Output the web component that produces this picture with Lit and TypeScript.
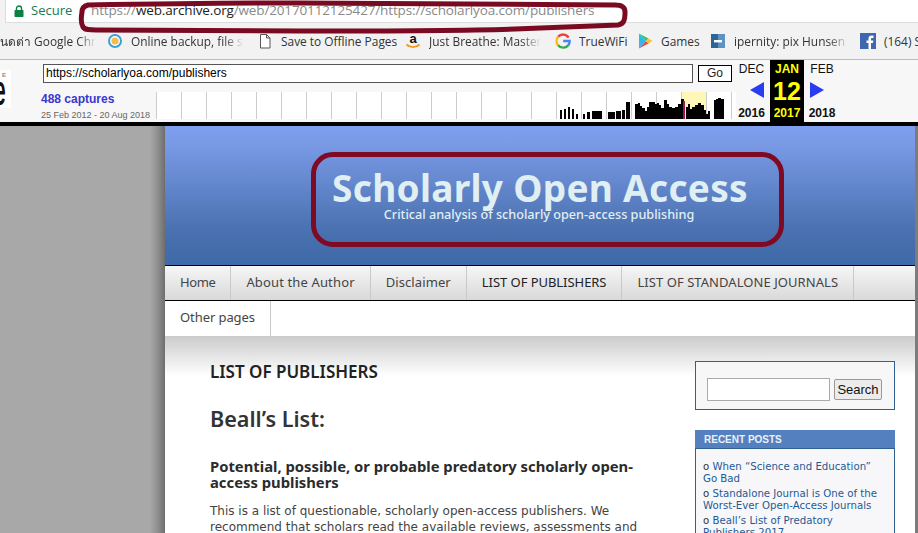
import { LitElement, html, css, svg } from "lit";
import { customElement } from "lit/decorators.js";

const SMALL_BARS: [number, number, number][] = [
  [560,2,9],[564,2,10],[568,2,12],[572,2,10],[576,2,5],[583,2,5],[587,3,7],[592,10,8],
  [608,7,7],[616,5,8],[622,3,9],[626,4,17],
];
const RUN: [number, number][] = [
  [635,15],[638,16],[640,13],[642,11],[645,8],[647,12],[649,17],[652,17],[655,15],[657,16],[659,14],
  [661,11],[664,19],[667,15],[669,12],[672,11],[675,12],[678,15],[681,20],
  [684,0],[686,12],[688,15],[690,10],[692,12],[695,14],[698,16],[701,14],[704,9],[706,5],[708,8],[710,0],
  [713,0],[714,19],[716,20],[718,21],[721,20],[724,0],
];

const BOOKMARKS = [
  { icon: "none", label: "นดต่า Google Chrome", left: 0, w: 96 },
  { icon: "ring", label: "Online backup, file sync", left: 11, w: 113 },
  { icon: "doc", label: "Save to Offline Pages", left: 13, w: 116, plain: true },
  { icon: "amazon", label: "Just Breathe: Mastering", left: 8, w: 112 },
  { icon: "g", label: "TrueWiFi", left: 14, w: 50, plain: true },
  { icon: "play", label: "Games", left: 8, w: 41, plain: true },
  { icon: "ipernity", label: "ipernity: pix Hunsen 1", left: 8, w: 115 },
  { icon: "fb", label: "(164) Sign", left: 11, w: 40, plain: true },
];

const NAV = [
  { label: "Home", cls: "home" },
  { label: "About the Author", cls: "about" },
  { label: "Disclaimer", cls: "disc" },
  { label: "LIST OF PUBLISHERS", cls: "on" },
  { label: "LIST OF STANDALONE JOURNALS", cls: "alone" },
];

function bmIcon(kind: string) {
  switch (kind) {
    case "ring":
      return svg`<circle cx="8" cy="8" r="6" fill="#fff" stroke="#39a0d8" stroke-width="2"/><circle cx="8" cy="8" r="3.6" fill="#f6bc4a"/>`;
    case "doc":
      return svg`<path d="M3.5 1.5H9.5L13 5V15H3.5Z M9.5 1.5V5H13" fill="#fff" stroke="#555" stroke-width="1"/>`;
    case "amazon":
      return svg`<text x="8" y="10" text-anchor="middle" font-family="Liberation Sans" font-weight="700" font-size="13" fill="#111">a</text><path d="M1.5 11.5C5 15 11 15 14.5 11.5" fill="none" stroke="#f39a1c" stroke-width="1.8"/>`;
    case "g":
      return svg`<path d="M13.6 4.6A6.6 6.6 0 0 0 3.1 3.8" fill="none" stroke="#ea4335" stroke-width="2.4"/><path d="M3.1 3.8A6.6 6.6 0 0 0 3.1 12.2" fill="none" stroke="#fbbc05" stroke-width="2.4"/><path d="M3.1 12.2A6.6 6.6 0 0 0 13.2 12.4" fill="none" stroke="#34a853" stroke-width="2.4"/><path d="M13.2 12.4A6.6 6.6 0 0 0 14.6 8H8.2" fill="none" stroke="#4285f4" stroke-width="2.4"/>`;
    case "play":
      return svg`<path d="M2 0.5L9 8L2 15.5Z" fill="#2fb8f0"/><path d="M2 0.5L11.5 5.5L9 8Z" fill="#34c46c"/><path d="M2 15.5L11.5 10.5L9 8Z" fill="#ea4a4a"/><path d="M11.5 5.5L15.5 8L11.5 10.5L9 8Z" fill="#fbc02d"/>`;
    case "ipernity":
      return svg`<rect x="1" y="1" width="14" height="14" fill="#5d92c4"/><rect x="1" y="1" width="7" height="14" fill="#2f6497"/><rect x="4" y="7" width="8" height="2.4" fill="#fff"/>`;
    case "fb":
      return svg`<rect width="16" height="16" fill="#3f66b0"/><path d="M11 16V10H13L13.4 7.6H11V6.2C11 5.4 11.3 5 12.2 5H13.5V2.8C13 2.7 12.3 2.6 11.6 2.6C9.7 2.6 8.5 3.8 8.5 5.8V7.6H6.5V10H8.5V16Z" fill="#fff"/>`;
    default:
      return svg``;
  }
}

@customElement("app-root")
export class AppRoot extends LitElement {
  static styles = css`
    :host {
      display: block;
      position: relative;
      width: 918px;
      height: 533px;
      overflow: hidden;
      background: #fff;
      font-family: "Liberation Sans", Arial, sans-serif;
    }
    .addr {
      height: 23px;
      background: #f2f2f2;
      padding-left: 5px;
      display: flex;
    }
    .omnibox {
      flex: 1;
      background: #fff;
      border-left: 1px solid #ddd;
      border-bottom: 1px solid #ddd;
      display: flex;
      align-items: center;
      font-family: "Open Sans", sans-serif;
      font-size: 13.5px;
      padding: 0 0 2px 8px;
      white-space: nowrap;
    }
    .lock { width: 10px; height: 12px; margin-right: 7px; margin-top: 1px; flex: none; }
    .secure { color: #1a7a50; width: 49px; font-size: 13px; margin-right: 11px; }
    .url { color: #8a8a8a; letter-spacing: -0.14px; }
    .url b { color: #222; font-weight: 400; }
    .bookmarks {
      height: 36px;
      background: #f2f2f2;
      border-bottom: 1px solid #bdbdbd;
      display: flex;
      align-items: center;
      font-family: "Open Sans", sans-serif;
      font-size: 11.9px;
      color: #333;
      overflow: hidden;
      white-space: nowrap;
    }
    .bm { display: flex; align-items: center; flex: none; }
    .bm svg { width: 16px; height: 16px; margin-right: 8px; flex: none; }
    .bm .label { overflow: hidden; display: block; -webkit-mask-image: linear-gradient(90deg, #000 82%, transparent); mask-image: linear-gradient(90deg, #000 82%, transparent); }
    .bm .label.plain { -webkit-mask-image: none; mask-image: none; }
    .wayback {
      height: 62px;
      background: #f7f7f7;
      display: flex;
    }
    .logo {
      position: relative;
      width: 11px;
      height: 38px;
      margin-top: 10px;
      margin-right: 30px;
      background: #fff;
      overflow: hidden;
      flex: none;
      font-weight: 700;
      font-size: 30px;
      line-height: 36px;
      color: #111;
    }
    .logo span { display: block; transform-origin: left top; transform: translate(-6px, -4px) scale(0.7, 1.4); }
    .logo small { position: absolute; left: 2px; top: 2px; font-size: 6px; line-height: 7px; color: #888; font-weight: 700; }
    .wb-main { width: 692px; flex: none; display: flex; flex-direction: column; }
    .wb-form { display: flex; align-items: center; padding: 4px 0 0 2px; gap: 5px; }
    .wb-input {
      width: 646px;
      height: 15px;
      border: 1px solid #555;
      background: #fff;
      font-size: 12px;
      line-height: 15px;
      color: #000;
      padding: 1px 0 1px 2px;
      box-sizing: content-box;
      white-space: nowrap;
    }
    .wb-go {
      width: 32px;
      height: 15px;
      border: 1px solid #000;
      background: #fff;
      font-size: 12px;
      line-height: 15px;
      text-align: center;
      color: #222;
    }
    .wb-row { display: flex; margin-top: 9px; }
    .caps { width: 115px; flex: none; }
    .caps a { display: block; color: #3838d0; font-weight: 700; font-size: 12px; line-height: 14px; }
    .caps span { display: block; color: #666; font-size: 9px; line-height: 11px; margin-top: 4px; white-space: nowrap; }
    .graph { display: block; width: 580px; height: 30px; flex: none; }
    .cal { display: flex; margin-left: 3px; font-weight: 700; text-align: center; color: #111; }
    .cal-col { width: 31px; padding-right: 3px; display: flex; flex-direction: column; align-items: center; font-size: 12px; }
    .cal-col.now { width: 34px; padding-right: 0; background: #000; color: #ff0; }
    .cal-col.next { width: 36px; padding-right: 4px; }
    .cal-m { line-height: 14px; margin-top: 2px; font-weight: 400; }
    .now .cal-m { font-weight: 700; }
    .cal-mid { height: 30px; display: flex; align-items: center; font-size: 25px; justify-content: center; }
    .cal-y { line-height: 14px; }
    .arrow { width: 14px; height: 16px; display: block; }
    .arrow.l { margin-left: 11px; margin-top: -2px; }
    .arrow.r { margin-left: -11px; margin-top: -2px; }
    .blackbar { height: 4px; background: #000; }
    .site { display: flex; height: 407px; }
    .gutter-l { width: 165px; flex: none; background: linear-gradient(90deg, #a8a8a8 0, #a8a8a8 150px, #8e8e8e 158px, #6e6e6e 165px); }
    .gutter-r { width: 3px; flex: none; background: #7c7c7c; }
    .page { flex: 1; min-width: 0; font-family: "Noto Sans", sans-serif; color: #333; display: flex; flex-direction: column; }
    .head {
      position: relative;
      height: 139px;
      background: linear-gradient(180deg, #7e9ff0 0, #7a9ae6 12%, #4a71b0 75%, #3f69a8 100%);
      text-align: center;
      color: #e0eff2;
    }
    .title {
      font-family: "Noto Sans", sans-serif;
      font-weight: 700;
      font-size: 37px;
      line-height: 44px;
      padding-top: 40px;
      letter-spacing: 0.3px;
    }
    .tagline { font-size: 12.65px; line-height: 16px; margin-top: -4px; margin-right: 2px; font-weight: 500; }
    .note {
      position: absolute;
      left: 146px;
      top: 26px;
      width: 473px;
      height: 95px;
      box-sizing: border-box;
      border: 5px solid #7f0a24;
      border-radius: 22px;
    }
    .nav { display: flex; border-top: 1px solid #000; height: 34px; box-sizing: content-box; background: linear-gradient(180deg, #f6f6f6, #d9d9d9); }
    .nav2 { background: #fff; height: 35px; border-top: 1px solid #000; display: flex; }
    .nav a, .nav2 a {
      display: block;
      padding: 0 15px;
      border-right: 1px solid #c9c9c9;
      font-size: 13px;
      line-height: 33px;
      color: #444;
      white-space: nowrap;
    }
    .nav2 a { letter-spacing: -0.08px; }
    .nav a.home { letter-spacing: -0.4px; }
    .nav a.about { letter-spacing: 0.14px; }
    .nav a.disc { letter-spacing: 0.1px; }
    .nav a.on { color: #222; letter-spacing: -0.05px; }
    .nav a.alone { letter-spacing: 0.06px; }
    .body {
      flex: 1;
      display: flex;
      background: linear-gradient(180deg, #cbcbcb 0, #fff 40px);
      padding-left: 45px;
      overflow: hidden;
    }
    .main { width: 430px; flex: none; padding-top: 26px; }
    .main h2 { margin: 0; font-size: 17px; line-height: 20px; font-weight: 600; color: #222; }
    .main h1 { margin: 22px 0 0; font-size: 21.6px; line-height: 30px; font-weight: 600; color: #333; }
    .main h3 { margin: 24px 0 0; font-size: 14.8px; line-height: 16px; font-weight: 700; color: #2b2b2b; }
    .main p {
      margin: 13px 0 0;
      font-family: "DejaVu Sans", sans-serif;
      font-size: 12px;
      line-height: 16px;
      color: #444;
    }
    .side { margin-left: 55px; width: 200px; flex: none; padding-top: 25px; }
    .search {
      box-sizing: border-box;
      height: 49px;
      border: 1px solid #30608f;
      background: #f7f7f7;
      display: flex;
      align-items: center;
      padding: 8px 0 0 11px;
    }
    .search .in { width: 121px; height: 21px; background: #fff; border: 1px solid #aaa; margin-right: 4px; }
    .search .btn {
      width: 46px; height: 19px; border: 1px solid #999; background: #ececec; border-radius: 2px;
      font-family: "Liberation Sans", sans-serif; font-size: 13px; line-height: 19px; text-align: center; color: #111;
    }
    .widget { margin-top: 20px; }
    .widget-h {
      height: 18px; background: #5480bf; color: #eaf0f8;
      font-family: "Liberation Sans", sans-serif; font-weight: 700; font-size: 10px; line-height: 19px; padding-left: 9px;
    }
    .widget-b {
      border: 1px solid #30608f; background: #f7f7f9; padding: 12px 15px 40px 7px;
      font-family: "DejaVu Sans", sans-serif;
      font-size: 10.2px; line-height: 12px; color: #1e5a96; height: 100px;
    }
    .widget-b div { margin-bottom: 3px; }
    .widget-b i { font-style: normal; color: #333; }
    .annot { position: absolute; left: 0; top: 0; pointer-events: none; }
  `;

  render() {
    const ticks = Array.from({ length: 24 }, (_, i) => 0.5 + i * 25);
    const runBars = RUN.slice(0, -1).map(([x, h], i) => {
      const w = RUN[i + 1][0] - x;
      return h ? svg`<rect x=${x - 156} y=${27 - h} width=${w} height=${h} fill="#000"/>` : null;
    });
    return html`
      <div class="addr">
        <div class="omnibox">
          <svg class="lock" viewBox="0 0 10 12"><path d="M2.5 5V3.5a2.5 2.5 0 0 1 5 0V5" fill="none" stroke="#0b8043" stroke-width="1.4"/><rect x="0.5" y="5" width="9" height="7" rx="0.8" fill="#0b8043"/></svg>
          <span class="secure">Secure</span>
          <span class="url">https://<b>web.archive.org</b>/web/20170112125427/https://scholarlyoa.com/publishers</span>
        </div>
      </div>
      <div class="bookmarks">
        ${BOOKMARKS.map((b, i) => html`
          <div class="bm" style="margin-left:${b.left}px">
            ${i === 0 ? null : html`<svg viewBox="0 0 16 16">${bmIcon(b.icon)}</svg>`}
            <span class="label ${b.plain ? "plain" : ""}" style="width:${b.w}px">${b.label}</span>
          </div>`)}
      </div>
      <div class="wayback">
        <div class="logo"><small>E</small><span>e</span></div>
        <div class="wb-main">
          <div class="wb-form">
            <div class="wb-input">https://scholarlyoa.com/publishers</div>
            <div class="wb-go">Go</div>
          </div>
          <div class="wb-row">
            <div class="caps"><a>488 captures</a><span>25 Feb 2012 - 20 Aug 2018</span></div>
            <svg class="graph" viewBox="0 0 580 30">
              <rect x="0" y="0" width="580" height="27" fill="#fff"/>
              <rect x="526" y="0" width="25" height="27" fill="#fff7b8"/>
              ${ticks.map((x) => svg`<line x1=${x} x2=${x} y1="0" y2="27" stroke="#ccc"/>`)}
              ${SMALL_BARS.map(([x, w, h]) => svg`<rect x=${x - 156} y=${27 - h} width=${w} height=${h} fill="#000"/>`)}
              ${runBars}
              <rect x="527" y="9" width="2" height="18" fill="#a8124f"/>
            </svg>
          </div>
        </div>
        <div class="cal">
          <div class="cal-col"><div class="cal-m">DEC</div><div class="cal-mid"><svg class="arrow l" viewBox="0 0 14 16"><path d="M14 0V16L0 8Z" fill="#2a3cf0"/></svg></div><div class="cal-y">2016</div></div>
          <div class="cal-col now"><div class="cal-m">JAN</div><div class="cal-mid">12</div><div class="cal-y">2017</div></div>
          <div class="cal-col next"><div class="cal-m">FEB</div><div class="cal-mid"><svg class="arrow r" viewBox="0 0 14 16"><path d="M0 0V16L14 8Z" fill="#2a3cf0"/></svg></div><div class="cal-y">2018</div></div>
        </div>
      </div>
      <div class="blackbar"></div>
      <div class="site">
        <div class="gutter-l"></div>
        <div class="page">
          <div class="head">
            <div class="title">Scholarly Open Access</div>
            <div class="tagline">Critical analysis of scholarly open-access publishing</div>
            <div class="note"></div>
          </div>
          <div class="nav">
            ${NAV.map((n) => html`<a class=${n.cls}>${n.label}</a>`)}
          </div>
          <div class="nav2"><a>Other pages</a></div>
          <div class="body">
            <div class="main">
              <h2>LIST OF PUBLISHERS</h2>
              <h1>Beall’s List:</h1>
              <h3>Potential, possible, or probable predatory scholarly open-access publishers</h3>
              <p>This is a list of questionable, scholarly open-access publishers. We recommend that scholars read the available reviews, assessments and</p>
            </div>
            <div class="side">
              <div class="search"><div class="in"></div><div class="btn">Search</div></div>
              <div class="widget">
                <div class="widget-h">RECENT POSTS</div>
                <div class="widget-b">
                  <div><i>o</i> When “Science and Education” Go Bad</div>
                  <div><i>o</i> Standalone Journal is One of the Worst-Ever Open-Access Journals</div>
                  <div><i>o</i> Beall’s List of Predatory Publishers 2017</div>
                </div>
              </div>
            </div>
          </div>
        </div>
        <div class="gutter-r"></div>
      </div>
      <svg class="annot" width="918" height="40" viewBox="0 0 918 40">
        <path d="M88 5C84 6 82 8 82 12C81 18 81 24 83 27C85 30 90 30 96 30L300 31C380 31 460 31 515 29C560 27 600 26 618 25C624 24 625 20 625 12C625 7 622 5 615 5C500 4 400 3 300 3C220 3 150 4 88 5Z" fill="none" stroke="#7a0a22" stroke-width="5"/>
      </svg>
    `;
  }
}
